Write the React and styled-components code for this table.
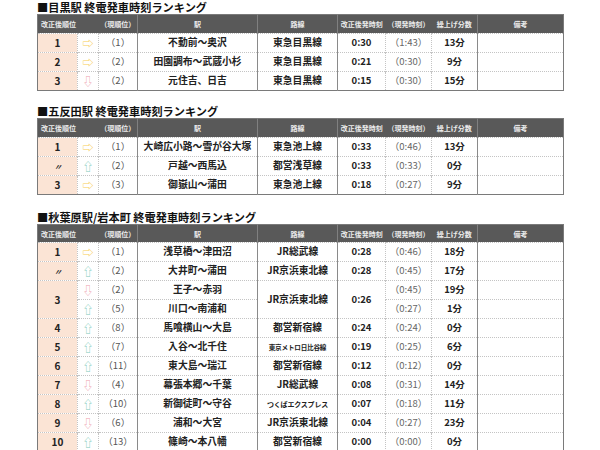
import React from "react";
import styled, { createGlobalStyle } from "styled-components";

const GlobalStyle = createGlobalStyle`
  html, body {
    margin: 0;
    padding: 0;
    background: #ffffff;
  }
  body {
    font-family: "Noto Sans CJK JP", "Noto Sans", sans-serif;
    color: #222;
  }
`;

const Page = styled.div`
  width: 600px;
  height: 450px;
  overflow: hidden;
  padding-left: 37px;
  box-sizing: border-box;
`;

const Section = styled.section`
  margin-top: ${(p) => p.$gap}px;
`;

const Title = styled.h2`
  margin: 0;
  height: 14px;
  box-sizing: border-box;
  padding-top: 1px;
  line-height: 12px;
  font-size: 11.2px;
  font-weight: 700;
  color: #111;
  white-space: pre;
`;

const Table = styled.table`
  width: 526px;
  table-layout: fixed;
  border-collapse: collapse;
  border: 1px solid #7a7a7a;
`;

const widths = [40, 21, 39, 120, 80, 48, 46, 46, 86];
const edges = ["dot", "dot", "solid", "solid", "solid", "dot", "dot", "solid", "none"];

const HeadRow = styled.tr`
  height: ${(p) => p.$h}px;
  background: #595959;
`;

const HeadCell = styled.th`
  padding: 0;
  font-size: 7px;
  font-weight: 700;
  color: #ececec;
  text-align: ${(p) => (p.$left ? "left" : "center")};
  padding-left: ${(p) => (p.$left ? "3px" : "0")};
  border-right: ${(p) => (p.$edge === "solid" ? "1px solid #808080" : "none")};
  white-space: nowrap;
  overflow: hidden;
`;

const Row = styled.tr`
  height: 19px;
`;

const kinds = {
  rank: "font-size: 10px; font-weight: 700; background: #fbe4d5; color: #222;",
  arrow: "font-size: 11px;",
  prev: "font-size: 9.5px; font-weight: 400; color: #555;",
  station: "font-size: 9.8px; font-weight: 700; color: #222;",
  line: "font-size: 9.8px; font-weight: 700; color: #222;",
  time: "font-size: 9.5px; font-weight: 700; color: #222;",
  prevtime: "font-size: 9.5px; font-weight: 400; color: #666;",
  diff: "font-size: 9.5px; font-weight: 700; color: #222;",
  note: "",
};

const Cell = styled.td`
  padding: 0;
  text-align: center;
  white-space: nowrap;
  overflow: hidden;
  line-height: 1;
  border-top: 1px dotted #c4c4c4;
  border-right: ${(p) =>
    p.$edge === "solid" ? "1px solid #8a8a8a" : p.$edge === "dot" ? "1px dotted #c4c4c4" : "none"};
  ${(p) => kinds[p.$kind]}
`;

const Ditto = styled.span`
  font-size: 8px;
  font-style: italic;
  letter-spacing: -1px;
`;

const Arrow = styled.span`
  color: ${(p) => (p.$dir === "up" ? "#7cc9b9" : p.$dir === "down" ? "#ee9fae" : "#f7cd55")};
`;

const SmallLine = styled.span`
  font-size: ${(p) => p.$size}px;
  letter-spacing: -0.2px;
`;

const arrowChar = { right: "⇨", up: "⇧", down: "⇩" };

const headers = ["改正後順位", "", "（現順位）", "駅", "路線", "改正後発時刻", "（現発時刻）", "繰上げ分数", "備考"];

const tables = [
  {
    title: "■目黒駅 終電発車時刻ランキング",
    gap: 0,
    headH: 19,
    rows: [
      { rank: "1", dir: "right", prev: "1", st: "不動前〜奥沢", line: "東急目黒線", time: "0:30", pt: "1:43", diff: "13分" },
      { rank: "2", dir: "right", prev: "2", st: "田園調布〜武蔵小杉", line: "東急目黒線", time: "0:21", pt: "0:30", diff: "9分" },
      { rank: "3", dir: "down", prev: "2", st: "元住吉、日吉", line: "東急目黒線", time: "0:15", pt: "0:30", diff: "15分" },
    ],
  },
  {
    title: "■五反田駅 終電発車時刻ランキング",
    gap: 13,
    headH: 19,
    rows: [
      { rank: "1", dir: "right", prev: "1", st: "大崎広小路〜雪が谷大塚", line: "東急池上線", time: "0:33", pt: "0:46", diff: "13分" },
      { rank: "〃", dir: "up", prev: "2", st: "戸越〜西馬込", line: "都営浅草線", time: "0:33", pt: "0:33", diff: "0分" },
      { rank: "3", dir: "right", prev: "3", st: "御嶽山〜蒲田", line: "東急池上線", time: "0:18", pt: "0:27", diff: "9分" },
    ],
  },
  {
    title: "■秋葉原駅/岩本町 終電発車時刻ランキング",
    gap: 15,
    headH: 18,
    rows: [
      { rank: "1", dir: "right", prev: "1", st: "浅草橋〜津田沼", line: "JR総武線", time: "0:28", pt: "0:46", diff: "18分" },
      { rank: "〃", dir: "up", prev: "2", st: "大井町〜蒲田", line: "JR京浜東北線", time: "0:28", pt: "0:45", diff: "17分" },
      { rank: "3", span: 2, dir: "down", prev: "2", st: "王子〜赤羽", line: "JR京浜東北線", time: "0:26", pt: "0:45", diff: "19分" },
      { skip: true, dir: "up", prev: "5", st: "川口〜南浦和", pt: "0:27", diff: "1分" },
      { rank: "4", dir: "up", prev: "8", st: "馬喰横山〜大島", line: "都営新宿線", time: "0:24", pt: "0:24", diff: "0分" },
      { rank: "5", dir: "up", prev: "7", st: "入谷〜北千住", line: "東京メトロ日比谷線", lineSize: 6.6, time: "0:19", pt: "0:25", diff: "6分" },
      { rank: "6", dir: "up", prev: "11", st: "東大島〜瑞江", line: "都営新宿線", time: "0:12", pt: "0:12", diff: "0分" },
      { rank: "7", dir: "down", prev: "4", st: "幕張本郷〜千葉", line: "JR総武線", time: "0:08", pt: "0:31", diff: "14分" },
      { rank: "8", dir: "up", prev: "10", st: "新御徒町〜守谷", line: "つくばエクスプレス", lineSize: 7, time: "0:07", pt: "0:18", diff: "11分" },
      { rank: "9", dir: "down", prev: "6", st: "浦和〜大宮", line: "JR京浜東北線", time: "0:04", pt: "0:27", diff: "23分" },
      { rank: "10", dir: "up", prev: "13", st: "篠崎〜本八幡", line: "都営新宿線", time: "0:00", pt: "0:00", diff: "0分" },
    ],
  },
];

const RankingTable = ({ data }) => (
  <Section $gap={data.gap}>
    <Title>{data.title}</Title>
    <Table>
      <colgroup>
        {widths.map((w, i) => (
          <col key={i} style={{ width: w }} />
        ))}
      </colgroup>
      <thead>
        <HeadRow $h={data.headH}>
          {headers.map((h, i) => (
            <HeadCell key={i} $edge={edges[i]} $left={i === 0}>
              {h}
            </HeadCell>
          ))}
        </HeadRow>
      </thead>
      <tbody>
        {data.rows.map((r, i) => (
          <Row key={i}>
            {!r.skip && (
              <Cell $kind="rank" $edge="dot" rowSpan={r.span || 1}>
                {r.rank === "〃" ? <Ditto>〃</Ditto> : r.rank}
              </Cell>
            )}
            <Cell $kind="arrow" $edge="dot">
              <Arrow $dir={r.dir}>{arrowChar[r.dir]}</Arrow>
            </Cell>
            <Cell $kind="prev" $edge="solid">{`（${r.prev}）`}</Cell>
            <Cell $kind="station" $edge="solid">{r.st}</Cell>
            {!r.skip && (
              <Cell $kind="line" $edge="solid" rowSpan={r.span || 1}>
                {r.lineSize ? <SmallLine $size={r.lineSize}>{r.line}</SmallLine> : r.line}
              </Cell>
            )}
            {!r.skip && (
              <Cell $kind="time" $edge="dot" rowSpan={r.span || 1}>
                {r.time}
              </Cell>
            )}
            <Cell $kind="prevtime" $edge="dot">{`（${r.pt}）`}</Cell>
            <Cell $kind="diff" $edge="solid">{r.diff}</Cell>
            <Cell $kind="note" $edge="none" />
          </Row>
        ))}
      </tbody>
    </Table>
  </Section>
);

export default function App() {
  return (
    <>
      <GlobalStyle />
      <Page>
        {tables.map((t, i) => (
          <RankingTable key={i} data={t} />
        ))}
      </Page>
    </>
  );
}
